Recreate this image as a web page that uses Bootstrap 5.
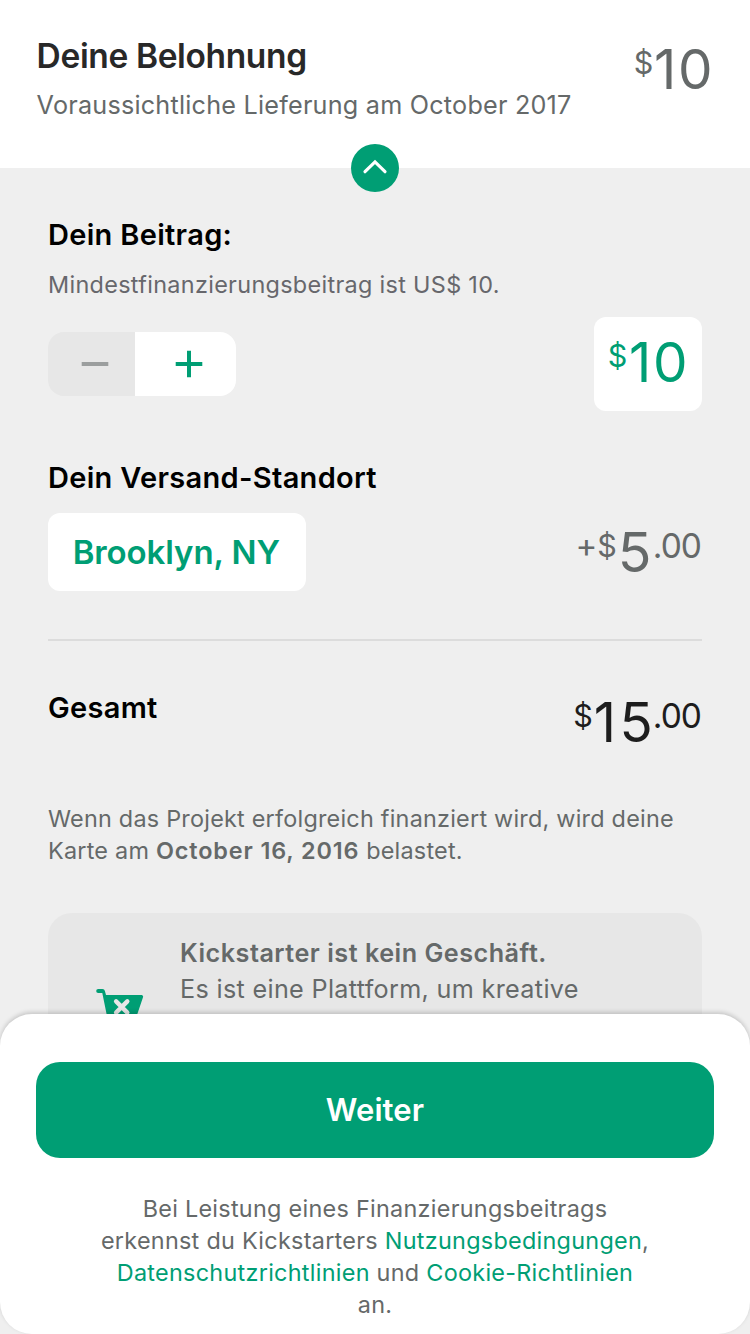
<!DOCTYPE html>
<html lang="de">
<head>
<meta charset="utf-8">
<meta name="viewport" content="width=device-width, initial-scale=1">
<title>Deine Belohnung</title>
<link href="https://cdn.jsdelivr.net/npm/bootstrap@5.3.0/dist/css/bootstrap.min.css" rel="stylesheet">
<style>
  :root { --ks-green: #009e74; --ks-grey: #656969; }
  body { font-family: Inter, "Liberation Sans", sans-serif; background: #efefef; color: var(--ks-grey); }
  .screen { height: 1334px; }
  .text-ks { color: var(--ks-green); }
  .bg-ks { background: var(--ks-green); }
  .top-bar { height: 168px; padding: 36px 35.5px 0 36.6px; }
  .reward-title { font-size: 33.5px; font-weight: 600; line-height: 40px; letter-spacing: -.36px; color: #282828; margin-bottom: 13px; }
  .delivery { font-size: 25.2px; line-height: 32px; letter-spacing: .22px; }
  .collapse-btn { width: 48px; height: 48px; z-index: 2; }
  .pledge { padding: 48px 48px 0; }
  .section-title { font-size: 29px; font-weight: 600; line-height: 37px; letter-spacing: .31px; color: #000; margin: 0; }
  .hint { font-size: 23.4px; line-height: 33px; letter-spacing: .32px; color: #67676c; margin: 15px 0 16px; }
  .body-copy { font-size: 23.4px; line-height: 32px; letter-spacing: .23px; }
  .body-copy strong { font-weight: 600; letter-spacing: .88px; }
  .stepper { width: 188px; height: 64px; border-radius: 16px; }
  .step-minus { width: 87px; padding-left: 7px; background: #e7e7e7; }
  .step-plus { padding-left: 6px; }
  .amount { height: 66px; line-height: 66px; }
  .amount-main { font-size: 54.8px; letter-spacing: 1.8px; }
  .amount-ship { font-size: 55.5px; letter-spacing: 1.4px; }
  .amount-total { letter-spacing: 3.5px; margin-right: -3.5px; }
  .amount-cur { font-size: 30.5px; padding-bottom: 12px; margin-right: .8px; }
  .amount-cents { font-size: 33.5px; letter-spacing: -.97px; padding-bottom: 13px; margin-right: 1px; }
  .amount-sign { font-size: 33px; padding-bottom: 14px; margin-right: 0; }
  .pledge-box { width: 108px; height: 94px; border-radius: 12px; padding: 0 12.5px 4px 0; }
  .pledge-box .amount-cur { margin-right: 1.6px; }
  .location-row { margin-top: 17px; }
  .location-box { width: 258px; height: 78px; border-radius: 12px; font-size: 33px; font-weight: 600; letter-spacing: -.1px; padding: 1px 1.5px 0 0; }
  .divider { height: 2px; background: #dcdcdc; margin: 48px 0; }
  .amount-dark { color: #1d1d1d; }
  .charge-note { margin: 48px 0 0; }
  .notice { height: 260px; border-radius: 24px; background: #e7e7e7; margin-top: 46px; padding-left: 48px; }
  .notice-icon { margin-top: 75px; margin-right: 36px; }
  .notice-copy { font-size: 25.2px; line-height: 36px; letter-spacing: .32px; padding-top: 22px; }
  .notice-copy strong { font-weight: 600; letter-spacing: .5px; }
  .sheet { height: 320px; border-radius: 32px; padding: 48px 36px 0; box-shadow: 0 -2px 4px rgba(0,0,0,.17); }
  .btn-next { height: 96px; border: 0; border-radius: 24px; background: var(--ks-green); color: #fff; font-size: 31px; font-weight: 600; letter-spacing: .1px; }
  .terms { letter-spacing: .28px; margin: 35px 40px 0; }
</style>
</head>
<body>
<div class="screen position-relative overflow-hidden">
  <header class="top-bar bg-white position-relative d-flex justify-content-between align-items-start">
    <div>
      <h1 class="reward-title">Deine Belohnung</h1>
      <p class="delivery m-0">Voraussichtliche Lieferung am October 2017</p>
    </div>
    <div class="amount d-flex align-items-center">
      <span class="amount-cur">$</span><span class="amount-main">10</span>
    </div>
    <button class="collapse-btn btn p-0 border-0 bg-ks rounded-circle position-absolute top-100 start-50 translate-middle d-flex" aria-label="Einklappen">
      <svg width="48" height="48" viewBox="0 0 48 48" fill="none" stroke="#fff" stroke-width="3.2" stroke-linecap="round"><path d="M14 27.700 24 17.900l10 9.800"/></svg>
    </button>
  </header>

  <main class="pledge">
    <h2 class="section-title">Dein Beitrag:</h2>
    <p class="hint">Mindestfinanzierungsbeitrag ist US$ 10.</p>
    <div class="d-flex justify-content-between align-items-center">
      <div class="stepper d-flex overflow-hidden">
        <div class="step-minus d-flex align-items-center justify-content-center">
          <svg width="28" height="28" viewBox="0 0 28 28" stroke="#9b9e9e" stroke-width="4"><path d="M.7 14h26.600"/></svg>
        </div>
        <div class="step-plus bg-white flex-grow-1 d-flex align-items-center justify-content-center">
          <svg width="28" height="28" viewBox="0 0 28 28" stroke="#009e74" stroke-width="4"><path d="M.7 14h26.600M14 .7v26.600"/></svg>
        </div>
      </div>
      <div class="pledge-box amount bg-white text-ks d-flex align-items-center justify-content-end">
        <span class="amount-cur">$</span><span class="amount-main">10</span>
      </div>
    </div>

    <h2 class="section-title mt-5">Dein Versand-Standort</h2>
    <div class="location-row d-flex justify-content-between align-items-center">
      <div class="location-box bg-white text-ks d-flex align-items-center justify-content-center">Brooklyn, NY</div>
      <div class="amount d-flex align-items-center">
        <span class="amount-sign">+</span><span class="amount-cur">$</span><span class="amount-main amount-ship">5</span><span class="amount-cents">.00</span>
      </div>
    </div>

    <div class="divider"></div>

    <div class="d-flex justify-content-between align-items-start">
      <h2 class="section-title">Gesamt</h2>
      <div class="amount amount-dark d-flex align-items-center">
        <span class="amount-cur">$</span><span class="amount-main amount-total">15</span><span class="amount-cents">.00</span>
      </div>
    </div>

    <p class="body-copy charge-note">Wenn das Projekt erfolgreich finanziert wird, wird deine<br>Karte am <strong>October 16, 2016</strong> belastet.</p>

    <section class="notice d-flex align-items-start">
      <svg class="notice-icon" width="48" height="48" viewBox="0 0 48 48">
        <path d="M2.200 1H6.500a2.500 2.500 0 0 1 2.400 1.900L10 7h35.500a1.600 1.600 0 0 1 1.500 2.200L39 33H12L6.300 5H2.200a2 2 0 0 1 0-4Z" fill="#009e74"/>
        <path d="m20.100 13.400 11.200 11.200m0-11.200L20.100 24.600" stroke="#e7e7e7" stroke-width="4.400" stroke-linecap="round"/>
        <circle cx="17" cy="40" r="4" fill="#009e74"/><circle cx="35" cy="40" r="4" fill="#009e74"/>
      </svg>
      <p class="notice-copy m-0"><strong>Kickstarter ist kein Geschäft.</strong><br>Es ist eine Plattform, um kreative</p>
    </section>
  </main>

  <footer class="sheet bg-white position-absolute bottom-0 start-0 w-100">
    <button class="btn btn-next w-100">Weiter</button>
    <p class="terms body-copy text-center">Bei Leistung eines Finanzierungsbeitrags<br>erkennst du Kickstarters <span class="text-ks">Nutzungsbedingungen</span>,<br><span class="text-ks">Datenschutzrichtlinien</span> und <span class="text-ks">Cookie-Richtlinien</span><br>an.</p>
  </footer>
</div>
<script src="https://cdn.jsdelivr.net/npm/bootstrap@5.3.0/dist/js/bootstrap.bundle.min.js"></script>
</body>
</html>
